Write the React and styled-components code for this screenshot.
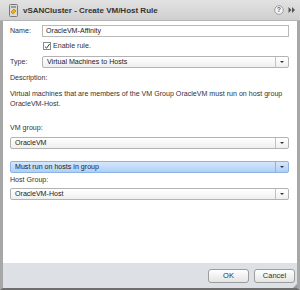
import React from 'react';
import styled, { createGlobalStyle } from 'styled-components';

const GlobalStyle = createGlobalStyle`
  html, body {
    margin: 0;
    padding: 0;
    background: #ffffff;
  }
  body {
    font-family: "Liberation Sans", Arial, sans-serif;
  }
`;

const Dialog = styled.div`
  width: 300px;
  height: 290px;
  box-sizing: border-box;
  display: flex;
  flex-direction: column;
  border-left: 3px solid #a7a7a7;
  border-right: 3px solid #a7a7a7;
  border-bottom: 2px solid #6e6e6e;
  background: #ffffff;
`;

const TitleBar = styled.div`
  height: 21px;
  box-sizing: border-box;
  display: flex;
  align-items: center;
  background: linear-gradient(#e2e2e2, #cfcfcf);
  border-bottom: 1px solid #b4b4b4;
  margin: 0 -3px;
  padding: 0 4px 0 9px;
`;

const Title = styled.span`
  flex: 1;
  margin-left: 5px;
  font-size: 8px;
  font-weight: bold;
  color: #333333;
`;

const Body = styled.div`
  flex: 1;
  padding: 4px 8px 0 7px;
  color: #333333;
  font-size: 7.1px;
`;

const FieldRow = styled.div`
  display: grid;
  grid-template-columns: 32px 1fr;
  align-items: center;
`;

const Label = styled.div`
  color: #333333;
  margin: ${(p) => p.$m || '0'};
  line-height: 9px;
`;

const TextInput = styled.div`
  height: 12px;
  box-sizing: border-box;
  border: 1px solid #b9b9b9;
  padding: 0 3px;
  line-height: 10px;
  color: #222;
`;

const Select = styled.div`
  height: 12px;
  box-sizing: border-box;
  display: flex;
  border: 1px solid ${(p) => (p.$active ? '#8db2e3' : '#b3b3b3')};
  border-radius: 2px;
  background: ${(p) =>
    p.$active
      ? 'linear-gradient(#d6e7fc, #aed0f6)'
      : 'linear-gradient(#ffffff, #efefef)'};
  margin: ${(p) => p.$m || '0'};
`;

const SelectValue = styled.div`
  flex: 1;
  padding: 0 4px;
  line-height: 10px;
  color: #222;
`;

const Arrow = styled.div`
  width: 12px;
  border-left: 1px solid ${(p) => (p.$active ? '#8db2e3' : '#c2c2c2')};
  display: flex;
  align-items: center;
  justify-content: center;
  &::after {
    content: '';
    border-left: 2px solid transparent;
    border-right: 2px solid transparent;
    border-top: 2px solid #333;
  }
`;

const CheckRow = styled.div`
  display: flex;
  align-items: center;
  margin: 5px 0 6px 33px;
  gap: 2px;
`;

const Box = styled.div`
  width: 8px;
  height: 8px;
  box-sizing: border-box;
  border: 1px solid #8a8a8a;
  background: #fff;
  display: flex;
  align-items: center;
  justify-content: center;
`;

const Paragraph = styled.p`
  margin: 7px 0 15px;
  line-height: 9.5px;
  color: #333;
`;

const Footer = styled.div`
  height: 25px;
  display: flex;
  justify-content: flex-end;
  align-items: center;
  gap: 5px;
  padding-right: 2px;
  background: #dde0e5;
  position: relative;
`;

const Button = styled.button`
  width: 41px;
  height: 14px;
  padding: 0;
  border: 1px solid #9d9d9d;
  border-radius: 3px;
  background: linear-gradient(#ffffff, #e4e4e4);
  font-family: "Liberation Sans", Arial, sans-serif;
  font-size: 7.5px;
  color: #333;
`;

const Grip = styled.div`
  position: absolute;
  right: 0;
  bottom: 0;
  width: 0;
  height: 0;
  border-left: 4px solid transparent;
  border-bottom: 4px solid #9a9a9a;
`;

const ClusterIcon = () => (
  <svg width="9" height="13" viewBox="0 0 9 13">
    <rect x="0.5" y="0.5" width="8" height="12" rx="1" fill="#d9d9d9" stroke="#7a7a7a" />
    <rect x="2" y="2" width="5" height="2" fill="#9a9a9a" />
    <path d="M2 8 L5 5 L7 7 L4 10 Z" fill="#f0b400" stroke="#9a6b00" strokeWidth="0.5" />
  </svg>
);

const HelpIcon = () => (
  <svg width="10" height="10" viewBox="0 0 10 10">
    <circle cx="5" cy="5" r="4.3" fill="#f4f4f4" stroke="#8a8a8a" strokeWidth="0.8" />
    <text x="5" y="7.4" fontSize="7" textAnchor="middle" fill="#666" fontFamily="Liberation Sans, Arial, sans-serif" fontWeight="bold">?</text>
  </svg>
);

const MoreIcon = () => (
  <svg width="8" height="8" viewBox="0 0 8 8" style={{ marginLeft: 4 }}>
    <path d="M0.5 1 L3.5 4 L0.5 7 Z M4 1 L7 4 L4 7 Z" fill="#555" />
  </svg>
);

const Check = () => (
  <svg width="7" height="7" viewBox="0 0 7 7">
    <path d="M1 3.5 L3 5.5 L6.5 0.5" fill="none" stroke="#333" strokeWidth="1.1" />
  </svg>
);

export default function App() {
  return (
    <>
      <GlobalStyle />
      <Dialog>
        <TitleBar>
          <ClusterIcon />
          <Title>vSANCluster - Create VM/Host Rule</Title>
          <HelpIcon />
          <MoreIcon />
        </TitleBar>
        <Body>
          <FieldRow>
            <Label>Name:</Label>
            <TextInput>OracleVM-Affinity</TextInput>
          </FieldRow>
          <CheckRow>
            <Box><Check /></Box>
            <span>Enable rule.</span>
          </CheckRow>
          <FieldRow>
            <Label>Type:</Label>
            <Select>
              <SelectValue>Virtual Machines to Hosts</SelectValue>
              <Arrow />
            </Select>
          </FieldRow>
          <Label $m="6px 0 0">Description:</Label>
          <Paragraph>
            Virtual machines that are members of the VM Group OracleVM must run on host group
            OracleVM-Host.
          </Paragraph>
          <Label>VM group:</Label>
          <Select $m="4px 0 0">
            <SelectValue>OracleVM</SelectValue>
            <Arrow />
          </Select>
          <Select $active $m="12px 0 0">
            <SelectValue>Must run on hosts in group</SelectValue>
            <Arrow $active />
          </Select>
          <Label $m="3px 0 0">Host Group:</Label>
          <Select $m="3px 0 0">
            <SelectValue>OracleVM-Host</SelectValue>
            <Arrow />
          </Select>
        </Body>
        <Footer>
          <Button>OK</Button>
          <Button>Cancel</Button>
          <Grip />
        </Footer>
      </Dialog>
    </>
  );
}
